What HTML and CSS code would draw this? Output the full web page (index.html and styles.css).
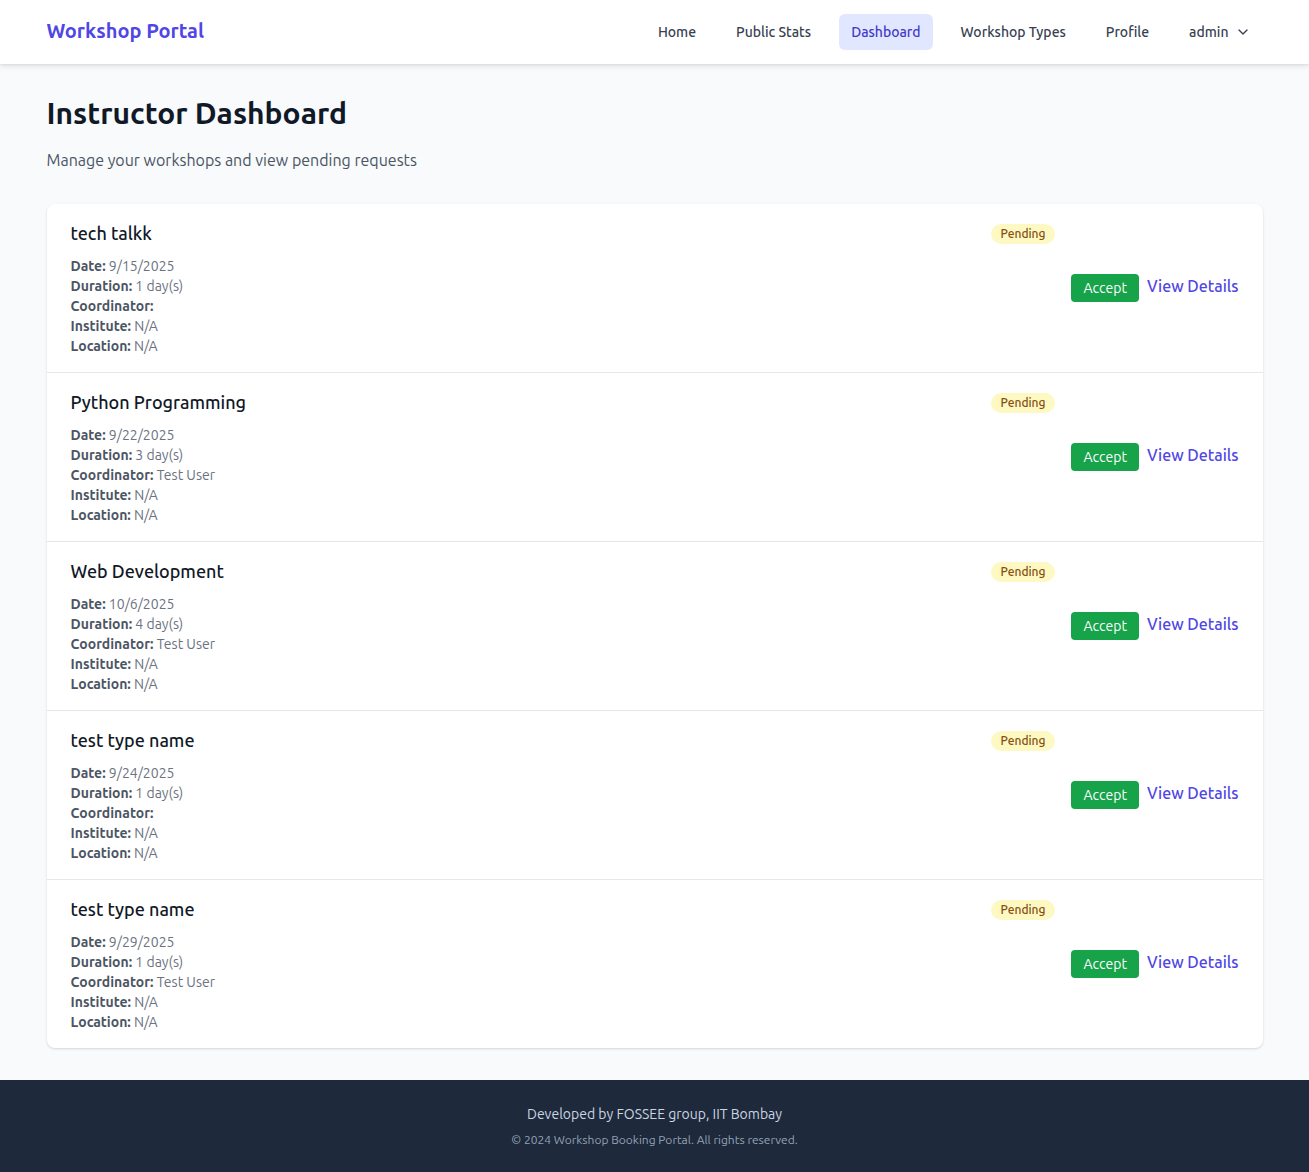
FILE: index.html
```html
<!DOCTYPE html>
<html lang="en">
<head>
<meta charset="utf-8">
<title>Instructor Dashboard</title>
<link rel="stylesheet" href="styles.css">
</head>
<body>
<header class="navbar">
  <div class="nav-inner">
    <a class="brand" href="#">Workshop Portal</a>
    <nav class="nav-links">
      <a class="nav-link" href="#">Home</a>
      <a class="nav-link" href="#">Public Stats</a>
      <a class="nav-link active" href="#">Dashboard</a>
      <a class="nav-link" href="#">Workshop Types</a>
      <a class="nav-link" href="#">Profile</a>
      <a class="nav-link user" href="#">admin
        <svg class="chev" width="16" height="16" viewBox="0 0 24 24" fill="none" stroke="currentColor" stroke-width="2" stroke-linecap="round" stroke-linejoin="round"><path d="M6 9l6 6 6-6"/></svg>
      </a>
    </nav>
  </div>
</header>

<main class="main">
  <h1 class="page-title">Instructor Dashboard</h1>
  <p class="page-sub">Manage your workshops and view pending requests</p>

  <section class="card">
    <div class="item">
      <div class="item-info">
        <div class="item-head">
          <h3 class="item-title">tech talkk</h3>
          <span class="badge">Pending</span>
        </div>
        <div class="details">
          <div><span class="lbl">Date:</span> 9/15/2025</div>
          <div><span class="lbl">Duration:</span> 1 day(s)</div>
          <div><span class="lbl">Coordinator:</span> </div>
          <div><span class="lbl">Institute:</span> N/A</div>
          <div><span class="lbl">Location:</span> N/A</div>
        </div>
      </div>
      <div class="actions">
        <button class="btn-accept">Accept</button>
        <a class="view" href="#">View Details</a>
      </div>
    </div>

    <div class="item">
      <div class="item-info">
        <div class="item-head">
          <h3 class="item-title">Python Programming</h3>
          <span class="badge">Pending</span>
        </div>
        <div class="details">
          <div><span class="lbl">Date:</span> 9/22/2025</div>
          <div><span class="lbl">Duration:</span> 3 day(s)</div>
          <div><span class="lbl">Coordinator:</span> Test User</div>
          <div><span class="lbl">Institute:</span> N/A</div>
          <div><span class="lbl">Location:</span> N/A</div>
        </div>
      </div>
      <div class="actions">
        <button class="btn-accept">Accept</button>
        <a class="view" href="#">View Details</a>
      </div>
    </div>

    <div class="item">
      <div class="item-info">
        <div class="item-head">
          <h3 class="item-title">Web Development</h3>
          <span class="badge">Pending</span>
        </div>
        <div class="details">
          <div><span class="lbl">Date:</span> 10/6/2025</div>
          <div><span class="lbl">Duration:</span> 4 day(s)</div>
          <div><span class="lbl">Coordinator:</span> Test User</div>
          <div><span class="lbl">Institute:</span> N/A</div>
          <div><span class="lbl">Location:</span> N/A</div>
        </div>
      </div>
      <div class="actions">
        <button class="btn-accept">Accept</button>
        <a class="view" href="#">View Details</a>
      </div>
    </div>

    <div class="item">
      <div class="item-info">
        <div class="item-head">
          <h3 class="item-title">test type name</h3>
          <span class="badge">Pending</span>
        </div>
        <div class="details">
          <div><span class="lbl">Date:</span> 9/24/2025</div>
          <div><span class="lbl">Duration:</span> 1 day(s)</div>
          <div><span class="lbl">Coordinator:</span> </div>
          <div><span class="lbl">Institute:</span> N/A</div>
          <div><span class="lbl">Location:</span> N/A</div>
        </div>
      </div>
      <div class="actions">
        <button class="btn-accept">Accept</button>
        <a class="view" href="#">View Details</a>
      </div>
    </div>

    <div class="item">
      <div class="item-info">
        <div class="item-head">
          <h3 class="item-title">test type name</h3>
          <span class="badge">Pending</span>
        </div>
        <div class="details">
          <div><span class="lbl">Date:</span> 9/29/2025</div>
          <div><span class="lbl">Duration:</span> 1 day(s)</div>
          <div><span class="lbl">Coordinator:</span> Test User</div>
          <div><span class="lbl">Institute:</span> N/A</div>
          <div><span class="lbl">Location:</span> N/A</div>
        </div>
      </div>
      <div class="actions">
        <button class="btn-accept">Accept</button>
        <a class="view" href="#">View Details</a>
      </div>
    </div>
  </section>
</main>

<footer class="footer">
  <p class="foot-main">Developed by FOSSEE group, IIT Bombay</p>
  <p class="foot-copy">© 2024 Workshop Booking Portal. All rights reserved.</p>
</footer>
</body>
</html>
```

FILE: styles.css
```css
* { box-sizing: border-box; }
html, body { margin: 0; padding: 0; }
body {
  font-family: Ubuntu, "Open Sans", "Noto Sans", sans-serif;
  background: #f8fafc;
  color: #111827;
}
a { text-decoration: none; }

.navbar {
  background: #fff;
  height: 64px;
  box-shadow: 0 2px 6px rgba(0,0,0,0.10), 0 1px 2px rgba(0,0,0,0.06);
  position: relative;
}
.nav-inner {
  max-width: 1280px;
  margin: 0 auto;
  padding: 0 32px;
  height: 64px;
  display: flex;
  align-items: center;
  justify-content: space-between;
}
.brand {
  font-size: 20px;
  line-height: 28px;
  font-weight: 700;
  color: #4f46e5;
  margin-top: -2px;
}
.nav-links {
  display: flex;
  align-items: center;
  gap: 16px;
}
.nav-link {
  font-size: 14px;
  font-weight: 500;
  color: #374151;
  padding: 8px 12px;
  border-radius: 6px;
  line-height: 20px;
  display: flex;
  align-items: center;
}
.nav-link.active {
  background: #e0e7ff;
  color: #4338ca;
}
.nav-link.user { gap: 6px; }

.main {
  max-width: 1280px;
  margin: 0 auto;
  padding: 32px 32px 32px;
}
.page-title {
  margin: 0;
  font-size: 30px;
  line-height: 36px;
  font-weight: 700;
  color: #111827;
  margin-top: -1px;
}
.page-sub {
  margin: 17px 0 0;
  font-size: 16px;
  line-height: 24px;
  color: #4b5563;
}

.card {
  margin-top: 32px;
  background: #fff;
  border-radius: 8px;
  box-shadow: 0 1px 3px rgba(0,0,0,0.10), 0 1px 2px rgba(0,0,0,0.06);
  overflow: hidden;
}
.item {
  display: flex;
  align-items: center;
  gap: 16px;
  padding: 16px 24px;
  border-bottom: 1px solid #e5e7eb;
}
.item:last-child { border-bottom: none; }
.item-info { flex: 1; }
.item-head {
  display: flex;
  align-items: center;
  justify-content: space-between;
}
.item-title {
  margin: 0;
  font-size: 18px;
  line-height: 28px;
  font-weight: 500;
  color: #111827;
  position: relative;
  top: -1px;
}
.badge {
  background: #fef9c3;
  color: #854d0e;
  font-size: 12px;
  line-height: 20px;
  padding: 0 10px;
  border-radius: 999px;
  font-weight: 500;
}
.details {
  margin-top: 8px;
  font-size: 14px;
  line-height: 20px;
  color: #6b7280;
}
.lbl {
  font-weight: 700;
  color: #4b5563;
}
.actions {
  display: flex;
  align-items: center;
  gap: 8px;
}
.btn-accept {
  font-family: inherit;
  background: #16a34a;
  color: #fff;
  border: none;
  border-radius: 4px;
  font-size: 14px;
  line-height: 20px;
  padding: 4px 12px;
}
.view {
  color: #4f46e5;
  font-size: 16px;
  line-height: 24px;
  font-weight: 500;
  position: relative;
  top: -2px;
}

.footer {
  background: #1e293b;
  padding: 24px 16px 24px;
  text-align: center;
}
.foot-main {
  margin: 0;
  font-size: 14px;
  line-height: 20px;
  color: #cbd5e1;
}
.foot-copy {
  margin: 8px 0 0;
  font-size: 12px;
  line-height: 16px;
  color: #94a3b8;
}
```
